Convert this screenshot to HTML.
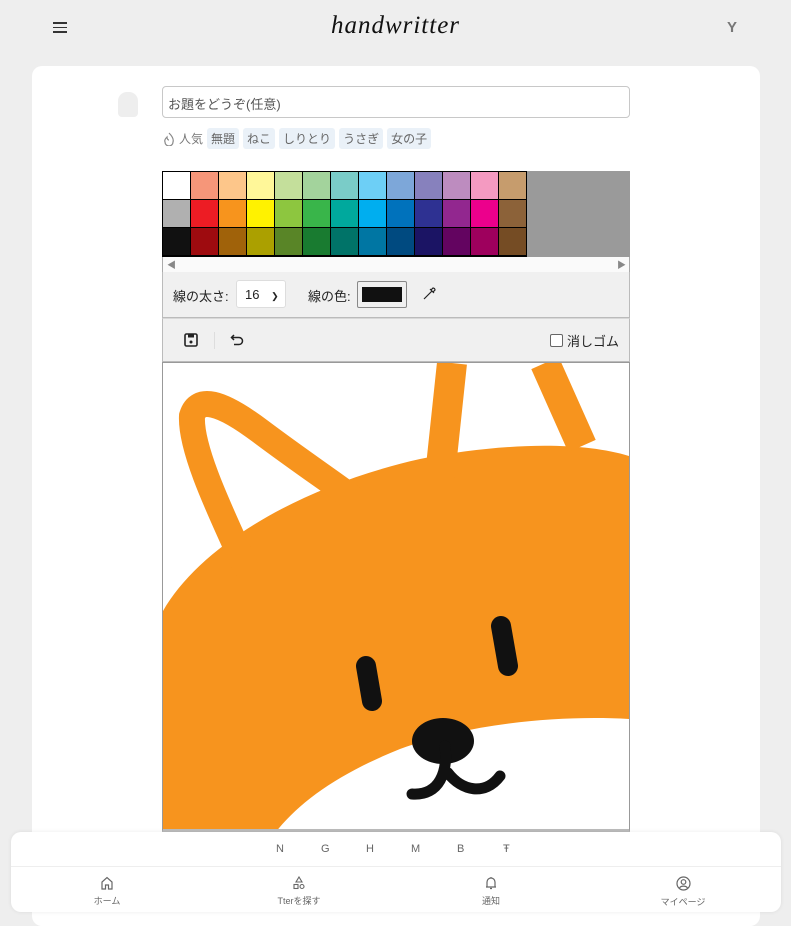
<!DOCTYPE html>
<html><head><meta charset="utf-8"><style>
*{box-sizing:border-box;margin:0;padding:0}
body{width:791px;height:914px;overflow:hidden;background:#eeeeee;font-family:"Liberation Sans","Noto Sans CJK JP",sans-serif;position:relative;color:#333}
.logo{position:absolute;left:0;right:0;top:12px;text-align:center;font-family:"Liberation Serif",serif;font-style:italic;font-size:25px;letter-spacing:1px;color:#111}
.card{position:absolute;left:32px;top:66px;width:728px;height:860px;background:#fff;border-radius:10px}
.inp{position:absolute;left:162px;top:86px;width:468px;height:32px;border:1px solid #c8c8c8;border-radius:4px;font-size:13px;color:#555;padding:7px 5px}
.tags{position:absolute;left:163px;top:128px;font-size:12px;color:#777;display:flex;gap:4px;align-items:center}
.tag{background:#eaf1f8;padding:2px 4px;border-radius:3px;color:#666}
.pal{position:absolute;left:162px;top:171px;width:468px;height:86px;background:#9a9a9a}
.sw{position:absolute;width:27px;height:27px}
.scroll{position:absolute;left:162px;top:257px;width:468px;height:15px;background:#fafafa;border-left:1px solid #aaa;border-right:1px solid #aaa}
.tb1{position:absolute;left:162px;top:272px;width:468px;height:46px;background:#f0f0f0;border:1px solid #bbb;border-top:none;font-size:13px;color:#222}
.tb2{position:absolute;left:162px;top:318px;width:468px;height:44px;background:#f0f0f0;border:1px solid #bbb;border-top:1px solid #d8d8d8}
.cv{position:absolute;left:162px;top:362px;width:468px;height:470px;border:1px solid #999;border-bottom:3px solid #bbb;background:#fff;overflow:hidden}
.nav{position:absolute;left:11px;top:832px;width:770px;height:80px;background:#fff;border-radius:10px;box-shadow:0 0 4px rgba(0,0,0,.08)}
.letters{position:absolute;top:11px;font-size:11px;color:#666}
.ni{position:absolute;top:44px;text-align:center;font-size:9px;color:#666;width:80px;line-height:14px}
</style></head><body>
<div style="position:absolute;left:53px;top:22px;width:14px"><div style="height:1.5px;background:#333;margin-bottom:3px"></div><div style="height:1.5px;background:#333;margin-bottom:3px"></div><div style="height:1.5px;background:#333"></div></div>
<div class="logo">handwritter</div>
<div style="position:absolute;left:727px;top:19px;font-weight:bold;font-size:15px;color:#777">Y</div>
<div class="card"></div>
<div style="position:absolute;left:118px;top:92px;width:20px;height:25px;background:#eee;border-radius:9px 9px 4px 4px"></div>
<div class="inp">お題をどうぞ(任意)</div>
<div class="tags"><svg width="12" height="14" viewBox="0 0 12 14"><path d="M6 1 C9 4 11 7 10 10 A4 4 0 0 1 2 10 C1 8 3 6 4 5 C4 7 5 8 6 8" fill="none" stroke="#888" stroke-width="1.2"/></svg><span>人気</span><span class="tag">無題</span><span class="tag">ねこ</span><span class="tag">しりとり</span><span class="tag">うさぎ</span><span class="tag">女の子</span></div>
<div class="pal" id="pal"></div>
<div class="scroll"><span style="position:absolute;left:4px;top:1px;font-size:9px;color:#888">◀</span><span style="position:absolute;right:3px;top:1px;font-size:9px;color:#888">▶</span></div>
<div class="tb1"><span style="position:absolute;left:10px;top:14px">線の太さ:</span>
<div style="position:absolute;left:73px;top:8px;width:50px;height:28px;background:#fff;border:1px solid #ddd;border-radius:3px;padding:6px 8px;font-size:13px;white-space:nowrap">16 <span style="font-size:9px;margin-left:8px">❯</span></div>
<span style="position:absolute;left:145px;top:14px">線の色:</span>
<div style="position:absolute;left:194px;top:9px;width:50px;height:27px;border:1px solid #888;border-radius:2px;padding:5px 4px"><div style="background:#111;height:100%"></div></div>
<svg style="position:absolute;left:259px;top:13px" width="16" height="16" viewBox="0 0 16 16"><path d="M3 13 L10 6 M8 4 L12 8 M11 3 a2 2 0 0 1 2 2 L11 7 L9 5 Z M3 13 L2 14" fill="none" stroke="#222" stroke-width="1.2"/></svg></div>
<div class="tb2">
<svg style="position:absolute;left:21px;top:14px" width="14" height="14" viewBox="0 0 14 14"><rect x="1" y="1" width="12" height="12" rx="1.5" fill="none" stroke="#222" stroke-width="1.6"/><rect x="4" y="1" width="6" height="3.5" fill="#222"/><circle cx="7" cy="9" r="1.5" fill="#222"/></svg>
<div style="position:absolute;left:51px;top:13px;width:1px;height:17px;background:#ddd"></div>
<svg style="position:absolute;left:67px;top:14px" width="14" height="14" viewBox="0 0 14 14"><path d="M4 2 L1.5 4.5 L4 7 M1.5 4.5 H9 a3.5 3.5 0 0 1 0 7 H4" fill="none" stroke="#222" stroke-width="1.5"/></svg>
<div style="position:absolute;left:387px;top:15px;width:13px;height:13px;border:1px solid #666;border-radius:2px;background:#fff"></div>
<span style="position:absolute;left:404px;top:12px;font-size:13px;color:#222">消しゴム</span></div>
<div class="cv"><svg width="468" height="470" viewBox="163 362 468 470">
<path d="M163 610 C200 545 300 485 420 458 C500 442 580 440 629 455 L629 718 C560 714 470 722 400 748 C340 772 300 800 275 832 L163 832 Z" fill="#f7941e"/>
<path d="M245 565 C225 520 190 450 192 415 C198 395 220 400 260 430 C300 460 330 480 350 495" fill="none" stroke="#f7941e" stroke-width="26" stroke-linecap="round"/>
<path d="M452 362 L440 475 M545 362 L582 445" stroke="#f7941e" stroke-width="30" fill="none"/>
<path d="M366 665 L372 700 M501 625 L508 665" stroke="#111" stroke-width="20" stroke-linecap="round"/>
<ellipse cx="443" cy="740" rx="31" ry="23" fill="#111"/>
<path d="M445 745 C448 770 440 795 412 793 M448 772 C462 790 485 795 500 775" stroke="#111" stroke-width="11" fill="none" stroke-linecap="round"/>
</svg></div>
<div class="nav">
<span class="letters" style="left:265px">N</span><span class="letters" style="left:310px">G</span><span class="letters" style="left:355px">H</span><span class="letters" style="left:400px">M</span><span class="letters" style="left:446px">B</span><span class="letters" style="left:492px">Ŧ</span>
<div style="position:absolute;left:0;right:0;top:34px;height:1px;background:#eee"></div>
<div class="ni" style="left:56px"><svg width="14" height="14" viewBox="0 0 14 14"><path d="M2 13 V6 L7 1.5 L12 6 V13 H8.5 V9 H5.5 V13 Z" fill="none" stroke="#666" stroke-width="1.2"/></svg><br>ホーム</div>
<div class="ni" style="left:248px"><svg width="14" height="14" viewBox="0 0 14 14"><path d="M7 1 L10 6 H4 Z" fill="none" stroke="#666" stroke-width="1.1"/><rect x="2" y="8.5" width="4" height="4" fill="none" stroke="#666" stroke-width="1.1"/><circle cx="10" cy="10.5" r="2" fill="none" stroke="#666" stroke-width="1.1"/></svg><br>Tterを探す</div>
<div class="ni" style="left:440px"><svg width="14" height="14" viewBox="0 0 14 14"><path d="M3 11 V6 a4 4 0 0 1 8 0 V11 Z M2 11 H12 M6 12.5 H8 M7 1 V2" fill="none" stroke="#666" stroke-width="1.2"/></svg><br>通知</div>
<div class="ni" style="left:632px"><svg width="15" height="15" viewBox="0 0 15 15"><circle cx="7.5" cy="7.5" r="6.5" fill="none" stroke="#666" stroke-width="1.2"/><circle cx="7.5" cy="6" r="2.3" fill="none" stroke="#666" stroke-width="1.2"/><path d="M3.5 12 C5 9.5 10 9.5 11.5 12" fill="none" stroke="#666" stroke-width="1.2"/></svg><br>マイページ</div>
</div>
<script>
var c=[["#fff","#f69679","#fdc68a","#fff799","#c4df9b","#a3d39c","#7accc8","#6dcff6","#7da7d9","#8781bd","#bd8cbf","#f49ac1","#c69c6d"],
["#b0b0b0","#ed1c24","#f7941d","#fff200","#8dc63f","#39b54a","#00a99d","#00aeef","#0072bc","#2e3192","#92278f","#ec008c","#8c6239"],
["#111","#9e0b0f","#a0620a","#aba000","#598527","#197b30","#007368","#0076a3","#004a80","#1b1464","#630460","#9e005d","#754c24"]];
var p=document.getElementById('pal'),h='<div style="position:absolute;left:0;top:0;width:365px;height:86px;background:#000"></div>';
for(var r=0;r<3;r++)for(var i=0;i<13;i++)h+='<div class="sw" style="left:'+(1+i*28)+'px;top:'+(1+r*28)+'px;background:'+c[r][i]+'"></div>';
p.innerHTML=h;
</script>
</body></html>
